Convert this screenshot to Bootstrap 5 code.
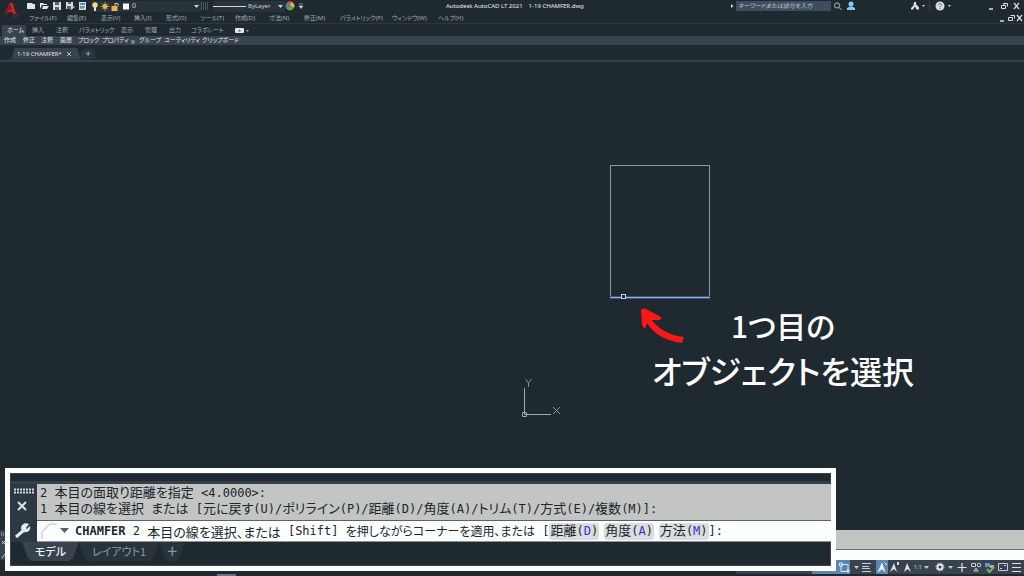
<!DOCTYPE html>
<html lang="ja">
<head>
<meta charset="utf-8">
<meta name="viewport" content="width=device-width, initial-scale=1">
<title>Autodesk AutoCAD LT 2021 - 1-19 CHAMFER.dwg</title>
<link href="https://cdn.jsdelivr.net/npm/bootstrap@5.3.0/dist/css/bootstrap.min.css" rel="stylesheet">
<style>
:root{--ink:#1f2930;--bar:#38434f;--pale:#c9ced2;--dim:#a3acb3}
body{font-family:"Noto Sans","Noto Sans CJK JP",sans-serif;font-feature-settings:"palt";font-size:6px;line-height:10px;background:var(--ink);color:var(--pale)}
button,a,input,select{color:inherit;font:inherit;font-feature-settings:inherit;background:none;border:0;padding:0;text-decoration:none;text-align:left;white-space:nowrap}
svg{display:block;flex:none}
.logo-col{width:26px}
.tbar{height:12px}
.mbar{height:12px;border-bottom:1px solid #2c3741}
.menus{display:grid;grid-template-columns:38px 34px 33px 32px 34px 35px 34px 35px 36px 52px 46px 30px;color:var(--dim);padding-left:3px}
.qat{width:65px}
.combo{background:#28333c;height:11px}
.layer{width:110px}
.layer select{appearance:none;flex:1;font-size:7px;line-height:10px;outline:0}
.ltype{width:72px}
.doc-title{margin-left:139px;font-size:6px;gap:6px;color:#eef0f1}
.finder{width:95px;height:10px;background:#3e4c5f;font-style:italic;padding-left:2px;outline:0}
.finder::placeholder{color:#c4cad0;opacity:1}
.rtabs{height:12px;display:grid;grid-template-columns:30px 24px 23px 42px 24px 24px 22px 44px 20px;padding-left:2px;color:var(--dim);align-items:center}
.rtabs .on{background:var(--bar);color:#e4e7e9;width:24px;padding-left:5px;height:11px}
.panels{height:9px;line-height:9px;background:var(--bar);display:grid;grid-template-columns:19px 18px 19px 18px 24px 37px 25px 38px 40px;padding-left:4px;color:#e3e6e8}
.ftabs{height:17px;padding:2px 0 0 9px;border-bottom:2px solid #34404d}
.ftab{height:12px;width:72px;background:var(--bar);clip-path:polygon(0 100%,3px 88%,5px 12%,8px 0,66px 0,69px 12%,71px 88%,100% 100%);padding:0 9px 0 8px}
.ftab a{color:#e1e4e6}
.fadd{width:14px;height:10px;background:#2a353f;border-radius:4px 4px 0 0;text-align:center;font-size:9px}
.canvas{min-height:120px}
.drawing{position:absolute;left:0;top:0;width:100%;height:100%;overflow:hidden}
.drawing svg{position:absolute}
.callout{position:absolute;left:633px;top:240px;width:300px;font-family:"Noto Sans CJK JP",sans-serif;font-size:32px;font-weight:500;line-height:45px;color:#fff}
.callout .first{font-size:30px}
.cmd-grip{width:12px;background:var(--bar)}
.cmd-hist{height:19px;background:#c2c5c4}
.cmd-line{height:11px;background:#fdfefe;border-top:1px solid #66717a}
.status{height:16px}
.sbar{width:288px;height:14px;background:var(--bar)}
.sbar button{height:14px}
.sbar .lit{background:#5788b5}
.taskmark{left:217px;bottom:0;width:19px;height:2px;background:#69737b}
.inset-shot{left:5px;right:188px;bottom:5px;border:5px solid #fff;background:var(--ink);box-shadow:0 0 0 1px #39434b inset}
.inset-top{height:11px;border-bottom:3px solid #34404c}
.in-tools{width:27px;background:#2c3844}
.hist,.prompt{font-family:"DejaVu Sans Mono","Noto Sans CJK JP",monospace;font-size:12px;color:#20262b;white-space:pre}
.hist{height:36px;background:#c2c5c4;line-height:16px;padding:1px 0 0 3px}
.prompt{height:22px;background:#fdfefe;border-top:1px solid #57626b;line-height:20px;border-bottom:1px solid #8b949b}
.jp{font-family:"Noto Sans CJK JP",sans-serif;font-size:13px;line-height:1}
.jp-sm{font-family:"Noto Sans CJK JP",sans-serif;font-size:12px}
.prompt button{background:#dadcdd;border-radius:3px;height:17px;line-height:17px;padding:0 1px}
.prompt i{font-style:normal;color:#3b2fe0}
.opts{gap:5px}
.ltabs{height:24px;font-size:11px;line-height:18px;font-family:"Noto Sans CJK JP",sans-serif;color:#8f999f;padding-left:12px}
.ltabs a{height:19px;padding:0 13px;background:#28333c;clip-path:polygon(0 0,100% 0,calc(100% - 6px) 85%,calc(100% - 10px) 100%,10px 100%,6px 85%)}
.ltabs .on{background:var(--bar);color:#f1f3f4;font-weight:500}
.ltabs .plus{padding:0 7px;font-weight:700;font-size:12px}
</style>
</head>
<body class="vh-100 overflow-hidden d-flex flex-column position-relative">
<header>
  <div class="d-flex">
    <div class="logo-col"><svg width="26" height="24" viewBox="0 0 26 24"><path d="M5 14 9.500 3h3L16 14h-3l-.8-2.500-3.700.8L7.500 14zM9.300 10l2.300-.8-.9-3.400z" fill="#d2232f"/><path d="M5 14 9.500 3l1.200 2.800L7.500 14z" fill="#8e1720"/><text x="13" y="18" font-size="5" fill="#b42631">LT</text></svg></div>
    <div class="flex-grow-1">
      <div class="tbar d-flex align-items-center">
        <div class="qat d-flex align-items-center">
          <button aria-label="新規"><svg width="13" height="12"><path d="M1 3h5l1 1h2v5H1z" fill="#e3e6e8"/></svg></button>
          <button aria-label="開く"><svg width="13" height="12"><path d="M1 9V3h3l1 1h3v1H3zm2 0 1-3h6L8 9z" fill="#e3e6e8"/></svg></button>
          <button aria-label="保存"><svg width="13" height="12"><path d="M1 2h8v8H1z" fill="#d9dddf"/><path d="M3 2h4v3H3zM3 7h4v3H3z" fill="#59636b"/></svg></button>
          <button aria-label="名前を付けて保存"><svg width="13" height="12"><path d="M1 2h7v7H1z" fill="#d9dddf"/><path d="M3 2h3v2H3zM2 6h4v3H2z" fill="#59636b"/><path d="m5 10 4-4 1 1-4 3z" fill="#e6b981"/></svg></button>
          <button aria-label="印刷"><svg width="13" height="12"><path d="M1 2h7v8H1z" fill="#d9dddf"/><path d="M2 3h5v2H2z" fill="#4d93c9"/><path d="M3 6v3M5 6v3M2 7h5" stroke="#6a747c" fill="none"/></svg></button>
        </div>
        <div class="combo layer d-flex align-items-center">
          <svg width="41" height="11"><circle cx="4" cy="4" r="2.700" fill="#ffd76d"/><path d="M3 6h2v4H3z" fill="#dfe2e4"/><circle cx="14" cy="5.500" r="2.400" fill="#fcc768"/><path d="M14 1v9M9.500 5.500h9M11 2.500l6 6M17 2.500l-6 6" stroke="#dfaa55" stroke-width=".8"/><path d="M20.500 5h6v5h-6z" fill="#efb44c"/><path d="M24 5V2.500h3V5" fill="none" stroke="#efc77b"/><path d="M32 2.500h6v6h-6z" fill="#fff"/></svg>
          <select aria-label="画層"><option>0</option></select>
          <svg width="10" height="10"><path d="M3 4h5L5.500 7z" fill="#cfd3d6"/></svg>
        </div>
        <svg width="8" height="10"><path d="M0 2h8M0 4h8M0 6h8M0 8h8" stroke="#76818a" stroke-dasharray="1 1"/></svg>
        <button class="combo ltype d-flex align-items-center ms-1" aria-label="線種"><svg width="35" height="10"><path d="M0 5.500h33" stroke="#d6dadd"/></svg><span class="flex-grow-1">ByLayer</span><svg width="10" height="10"><path d="M3 4h5L5.500 7z" fill="#cfd3d6"/></svg></button>
        <svg width="10" height="12" viewBox="-5 -6 10 12"><path d="M0 0V-4.500A4.500 4.500 0 0 1 4 2z" fill="#f0b13d"/><path d="M0 0 4 2a4.500 4.500 0 0 1-8 0z" fill="#55a954"/><path d="M0 0-4 2A4.500 4.500 0 0 1 0-4.500z" fill="#4784d6"/><path d="M0 0-3-3.300A4.500 4.500 0 0 1 1.500-4.200z" fill="#d94f66"/></svg>
        <svg width="12" height="10"><path d="M4 3h4M4 5h4L6 7.500z" stroke="#cfd3d6" stroke-width=".6" fill="#cfd3d6"/></svg>
        <div class="doc-title d-flex text-nowrap"><span>Autodesk AutoCAD LT 2021</span><span>1-19 CHAMFER.dwg</span></div>
        <div class="ms-auto d-flex align-items-center">
          <svg width="6" height="10"><path d="M1 3l2.500 2L1 7z" fill="#d2d6d9"/></svg>
          <input class="finder" type="search" placeholder="キーワードまたは語句を入力" aria-label="検索">
          <button aria-label="検索"><svg width="14" height="12"><circle cx="6" cy="5.500" r="2.600" fill="none" stroke="#b9c0c5"/><path d="m8 7.500 2.500 2.500" stroke="#b9c0c5"/></svg></button>
          <button aria-label="サインイン"><svg width="66" height="12"><circle cx="6" cy="4" r="2.500" fill="#8cc9f2"/><path d="M2 10V8l3-1.500h2L10 8v2z" fill="#8cc9f2"/></svg></button>
          <button aria-label="アプリ"><svg width="22" height="12"><path d="M3 2h2v2l3 3.500V9.500H5.500L4 6.500l-2 3H0V8l2.500-2.500z" fill="#dde1e3"/><path d="M11 5h3l-1.500 2z" fill="#cfd3d6"/><path d="M18.500 1v10" stroke="#354049"/></svg></button>
          <button aria-label="ヘルプ"><svg width="54" height="12"><circle cx="7" cy="6" r="4.500" fill="#d9dcde"/><path d="M5.500 5c0-2 3-2 3 0 0 1-1.500 1-1.500 2m0 .800v1" stroke="#68727a" fill="none"/><path d="M15 5h3l-1.500 2z" fill="#cfd3d6"/></svg></button>
          <button aria-label="最小化"><svg width="13" height="12"><path d="M2 9h4" stroke="#dde0e2" stroke-width="1.500"/></svg></button>
          <button aria-label="元に戻す"><svg width="12" height="12"><path d="M3.500 3.500h4v3M1.500 5.500h4v3h-4zM4 3V5" stroke="#dde0e2" fill="none"/></svg></button>
          <button aria-label="閉じる"><svg width="12" height="12"><path d="m2 3 5 6M7 3 2 9" stroke="#dde0e2" stroke-width="1.200"/></svg></button>
        </div>
      </div>
      <div class="mbar d-flex align-items-center">
        <nav class="menus">
          <button>ファイル(F)</button><button>編集(E)</button><button>表示(V)</button><button>挿入(I)</button><button>形式(O)</button><button>ツール(T)</button><button>作成(D)</button><button>寸法(N)</button><button>修正(M)</button><button>パラメトリック(P)</button><button>ウィンドウ(W)</button><button>ヘルプ(H)</button>
        </nav>
        <div class="ms-auto d-flex">
          <button aria-label="図面を最小化"><svg width="7" height="12"><path d="M0 9h4" stroke="#dde0e2" stroke-width="1.500"/></svg></button>
          <button aria-label="図面を元に戻す"><svg width="9" height="12"><path d="M3.500 3.500h4v3M1.500 5.500h4v3h-4z" stroke="#dde0e2" fill="none"/></svg></button>
          <button aria-label="図面を閉じる"><svg width="8" height="12"><path d="m1 3 5 6M6 3 1 9" stroke="#dde0e2" stroke-width="1.200"/></svg></button>
        </div>
      </div>
    </div>
  </div>
  <nav class="rtabs">
    <a class="on" href="#">ホーム</a><a href="#">挿入</a><a href="#">注釈</a><a href="#">パラメトリック</a><a href="#">表示</a><a href="#">管理</a><a href="#">出力</a><a href="#">コラボレート</a>
    <button aria-label="リボン表示"><svg width="14" height="10"><rect y="3" width="9" height="5" rx="1" fill="#e5e8ea"/><path d="M3 6.500h3L4.500 4.500z" fill="#49545e"/><path d="M11 5h3l-1.500 1.800z" fill="#b9c0c5"/></svg></button>
  </nav>
  <div class="panels">
    <button>作成</button><button>修正</button><button>注釈</button><button>画層</button><button>ブロック</button><button class="d-flex justify-content-between align-items-center pe-1">プロパティ<svg width="5" height="8"><path d="m1 3 2 2M4 3v3H1" stroke="#cfd3d6" fill="none" stroke-width=".8"/></svg></button><button>グループ</button><button>ユーティリティ</button><button>クリップボード</button>
  </div>
  <div class="ftabs d-flex align-items-center">
    <div class="ftab d-flex justify-content-between align-items-center"><a href="#">1-19 CHAMFER*</a><button aria-label="タブを閉じる"><svg width="5" height="6"><path d="m0 1 4 4M4 1 0 5" stroke="#b5bdc3"/></svg></button></div>
    <button class="fadd" aria-label="新しいタブ">+</button>
  </div>
</header>

<main class="canvas flex-grow-1 position-relative">
  <div class="drawing">
    <svg style="left:610px;top:103px" width="102" height="136" role="img" aria-label="長方形"><path d="M.5 133V.5h99V133" stroke="#929b9f" fill="none"/><path d="M0 132.500h100" stroke="#36568f" stroke-width="3"/><path d="M0 132.500h100" stroke="#9db0cf"/><rect x="11.500" y="129.500" width="4" height="4" fill="#1f2930" stroke="#cfd4d6"/></svg>
    <svg style="left:638px;top:245px" width="50" height="38"><path d="M3 4c1-3 4-3 7-1l13 7c1 2-2 4-5 3h-4c6 9 19 16 32 17l-2 6C28 34 16 27 9 16l-2 6c-1-1-4-4-3-8z" fill="#fd1717"/></svg>
    <svg style="left:520px;top:316px" width="44" height="42"><path d="M4.500 10v26.500H31M2.500 34.500h4v4h-4z" stroke="#a1a9ae" fill="none"/><path d="m5.500 1 3 4 3-4M8.500 5v4M33 29l7 7M40 29l-7 7" stroke="#858f95" fill="none"/></svg>
    <div class="callout text-center"><span class="first">1つ目の</span><br>オブジェクトを選択</div>
  </div>
</main>

<footer>
  <div class="d-flex">
    <div class="cmd-grip"><svg width="12" height="30"><path d="M1 3h9M1 5h9" stroke="#d0d5d8" stroke-dasharray="1 1"/><path d="m2 11 3 3m0-3-3 3M2 28l4-5" stroke="#d0d5d8" fill="none"/></svg></div>
    <div class="flex-grow-1"><div class="cmd-hist"></div><div class="cmd-line"></div></div>
  </div>
  <div class="status d-flex justify-content-end">
    <div class="sbar d-flex align-items-center">
      <div class="flex-grow-1"></div>
      <button class="lit" aria-label="オブジェクト スナップ"><svg width="38" height="14" viewBox="-25 0 38 14"><path d="M4 4.500h7v7H4zM2.500 3h3v3h-3zM10 10h2v2h-2z" fill="none" stroke="#d8e5f0"/></svg></button>
      <button aria-label="スナップ設定"><svg width="11" height="14"><path d="M4 6h5L6.500 9z" fill="#c9ced2"/></svg></button>
      <button aria-label="線の太さ"><svg width="15" height="14"><path d="M1 3.500h4M1 6.500h4M1 8.500h4M1 11.500h9M5 3.500h5M5 6.500h3M5 8.500h4" stroke="#c9ced2"/></svg></button>
      <button class="lit" aria-label="注釈の表示"><svg width="12" height="14"><path d="m2 12 4-9 3 9-3-3z" fill="#f0f3f5" stroke="#f0f3f5" stroke-width=".5"/><path d="m8 2 3 3" stroke="#f0f3f5"/></svg></button>
      <button aria-label="自動尺度"><svg width="13" height="14"><path d="m2 12 4-9 3 9-3-3zM9 2h2v3H9z" fill="#dfe2e4"/></svg></button>
      <button aria-label="注釈尺度アイコン"><svg width="13" height="14"><path d="m3 12 3-9 4 9-3.500-3z" fill="#dfe2e4"/></svg></button>
      <button class="d-flex align-items-center" aria-label="注釈尺度">1:1<svg width="11" height="14"><path d="M2 6h5L4.500 9z" fill="#c9ced2"/></svg></button>
      <button aria-label="ワークスペース"><svg width="22" height="14"><circle cx="7" cy="7" r="2.500" fill="none" stroke="#e4e7e9" stroke-width="2"/><circle cx="7" cy="7" r="4" fill="none" stroke="#e4e7e9" stroke-dasharray="1.500 1.600"/><path d="M15 6h5l-2.500 3z" fill="#c9ced2"/></svg></button>
      <button aria-label="注釈モニター"><svg width="14" height="14"><path d="M7 3v9M2.500 7.500h9" stroke="#e4e7e9" stroke-width="1.200"/></svg></button>
      <button aria-label="オブジェクト選択表示"><svg width="14" height="14"><path d="M2.500 3.500h4v3h-4zM5 11l2-3 2 3z" fill="none" stroke="#c9ced2"/><circle cx="10" cy="5" r="1.800" fill="none" stroke="#c9ced2"/></svg></button>
      <button aria-label="パフォーマンス"><svg width="14" height="14"><path d="M2 3h5v4H2z" fill="#4c9ad5"/><path d="M7 5h4v3H7z" fill="#dfa451"/><path d="m4 9 2.500 3L11 7" stroke="#77b36a" stroke-width="2" fill="none"/></svg></button>
      <button aria-label="フルスクリーン"><svg width="14" height="14"><path d="M1.500 3.500h9v7h-9zM7 5.500h2m-6 3h2" stroke="#c9ced2" fill="none"/></svg></button>
      <button aria-label="カスタマイズ"><svg width="13" height="14"><path d="M1 3.500h9M1 7.500h9M1 11.500h9" stroke="#dfe2e4"/></svg></button>
    </div>
  </div>
</footer>
<div class="taskmark position-absolute"></div>

<section class="inset-shot position-absolute" aria-label="コマンド ライン">
  <div class="inset-top"></div>
  <div class="d-flex">
    <div class="in-tools"><svg width="27" height="58"><path d="M4 5.500h20M4 8.500h20" stroke="#d7dbdd" stroke-width="2" stroke-dasharray="2 1"/><path d="m8 18 8 8m0-8-8 8" stroke="#dfe2e4" stroke-width="2"/><path d="M6 53 14 46" stroke="#e5e8e9" stroke-width="3"/><path d="M19 40l-3 4 1 1 3-3c1 4-2 7-6 6l-3-3c0-4 3-7 8-5z" fill="#e5e8e9"/></svg></div>
    <div class="flex-grow-1">
      <div class="hist"><div>2 <span class="jp">本目の面取り距離を指定</span> &lt;4.0000&gt;:</div><div>1 <span class="jp">本目の線を選択</span> <span class="jp">または</span> [<span class="jp">元に戻す</span>(U)/<span class="jp">ポリライン</span>(P)/<span class="jp">距離</span>(D)/<span class="jp">角度</span>(A)/<span class="jp">トリム</span>(T)/<span class="jp">方式</span>(E)/<span class="jp">複数</span>(M)]:</div></div>
      <div class="prompt d-flex align-items-center"><svg width="38" height="20"><path d="M5 18v-7l8-8h7" fill="none" stroke="#a9c3d4"/><path d="M23 7h9l-4.500 5z" fill="#555f66"/></svg><strong>CHAMFER</strong> 2 <span class="jp">本目の線を選択、または</span> [Shift] <span class="jp-sm">を押しながらコーナーを適用、または</span> [<div class="opts d-flex"><button><span class="jp">距離</span>(<i>D</i>)</button><button><span class="jp">角度</span>(<i>A</i>)</button><button><span class="jp">方法</span>(<i>M</i>)</button></div>]:</div>
    </div>
  </div>
  <nav class="ltabs d-flex"><a class="on" href="#">モデル</a><a href="#">レイアウト1</a><a class="plus" href="#" aria-label="新しいレイアウト">＋</a></nav>
</section>
<script src="https://cdn.jsdelivr.net/npm/bootstrap@5.3.0/dist/js/bootstrap.bundle.min.js"></script>
</body>
</html>
